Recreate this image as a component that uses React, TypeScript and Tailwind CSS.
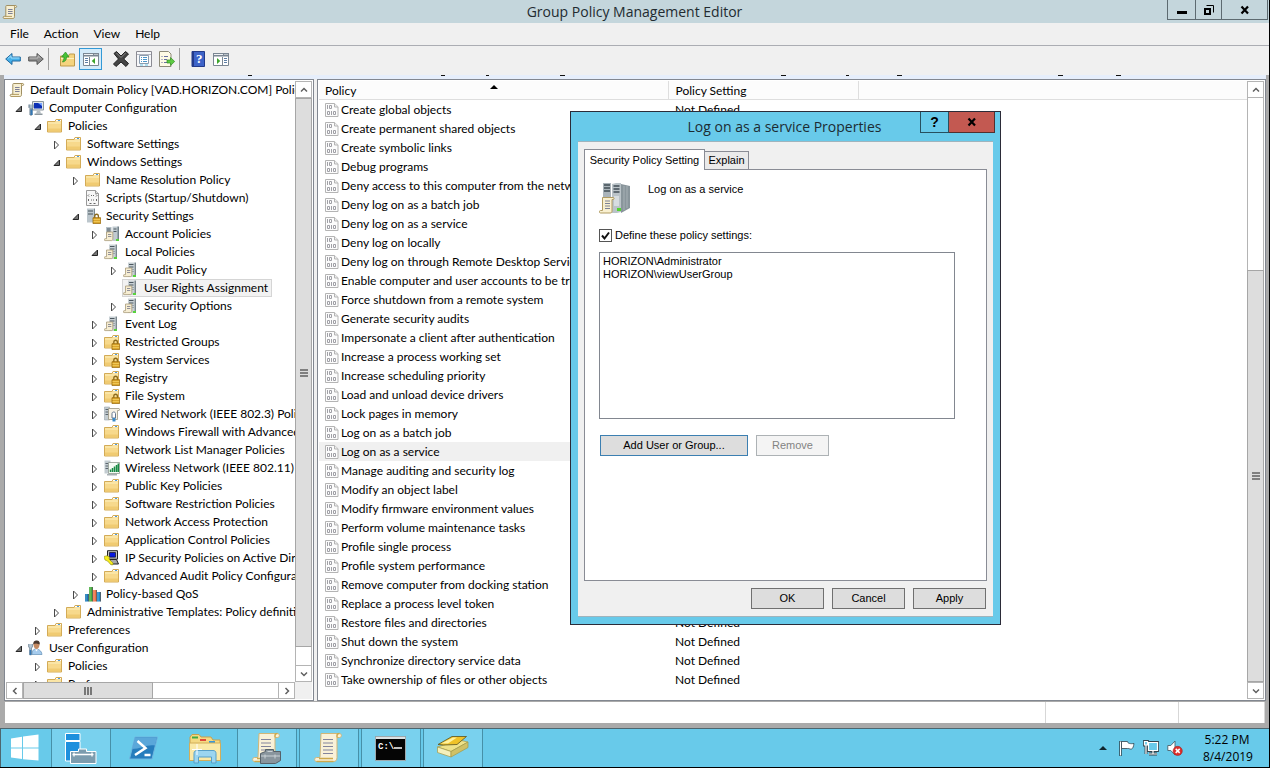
import React from "react";

type IconName =
  | "scroll" | "computer" | "folder" | "script" | "serverLock" | "servers" | "server"
  | "folderLock" | "wired" | "wireless" | "ipsec" | "qos" | "user";

const Paper = () => (
  <>
    <path d="M4.500 1.500h9.200c1.200 0 1.300 2 0 2h-1.200v9.200c0 1.200-.6 1.800-1.700 1.800H2.200c-1.400 0-1.400-2.200 0-2.200h1.600V2.600c0-.7.2-1.100.7-1.100z" fill="#f7efd2" stroke="#a08f62" />
    <path d="M12.500 3.500V2.200c0-.5.4-.7.9-.7M2.200 14.500h8M10 12.400H3" stroke="#b39c62" fill="none" />
    <path d="M6 5.500h4.600M6 7.500h4.600M6 9.500h4.600" stroke="#7d7f96" />
  </>
);

const FolderShape = () => (
  <>
    <path d="M.5 3.500h7.500l1-2h5.500v12.500H.5z" fill="#f7d98c" stroke="#d3ab57" />
    <path d="M1 4.500h13v1H1z" fill="#fdf0c0" />
    <path d="M9 2h5v1.200H9z" fill="#fff" />
    <path d="M11 2h2v1h-2z" fill="#4b9be0" />
    <path d="M1 10.500h13v3H1z" fill="#f0cb72" />
  </>
);

const Lock = () => (
  <>
    <path d="M9.800 10V8.200c0-2.600 3.600-2.600 3.600 0V10" fill="none" stroke="#8b6a1d" strokeWidth="1.300" />
    <path d="M8 9.700h7.600v5.900H8z" fill="#dba52b" stroke="#9a6c10" strokeWidth=".8" />
    <path d="M8.500 11.500h6.600M8.500 13.600h6.600" stroke="#f4cf63" strokeWidth=".8" />
  </>
);

const MiniPaper = () => (
  <>
    <path d="M2.500 6h6.300v7c0 1-.5 1.600-1.300 1.600H1c-1 0-1-1.900 0-1.900h1.500z" fill="#f6edd2" stroke="#a89b78" strokeWidth=".8" />
    <path d="M4 8.500h3.300M4 10.500h3.300" stroke="#77778a" strokeWidth=".8" />
  </>
);

const Tower = () => (
  <>
    <path d="M5 .500h6.500v14.500H5z" fill="#c9d1d5" />
    <path d="M11.500.500H13V13.500l-1.500 1.500z" fill="#7b878e" />
    <path d="M6 2.500h4.500M6 5h4.500" stroke="#4d5860" />
    <path d="M6 7.500h5M6 9.500h5" stroke="#9aa5ab" />
    <path d="M10 13h3v2h-3z" fill="#57d43a" />
  </>
);

function TreeIcon({ name }: { name: IconName }) {
  return (
    <svg viewBox="0 0 16 16" className="size-4 shrink-0" aria-hidden="true">
      {name === "scroll" && <Paper />}
      {name === "folder" && <FolderShape />}
      {name === "folderLock" && (<><FolderShape /><Lock /></>)}
      {name === "computer" && (
        <>
          <path d="M4.500 1.500h11v8.500h-11z" fill="#dfe5ea" stroke="#8c969e" />
          <path d="M6 3h8v5.500H6z" fill="#0b2fb5" />
          <path d="M10 3h4v3z" fill="#7ba5ff" />
          <path d="M9 10.500h3l1 3H8z" fill="#b5bec4" />
          <path d="M6.500 13.500h8v1.500h-8z" fill="#8d989f" />
          <path d="M1 4.500v3l1 1v6.500h2V8.500l1-1v-3" stroke="#63788a" fill="#a9bccb" />
          <path d="M2.500 9.500h2V15h-2z" fill="#3377b5" />
        </>
      )}
      {name === "script" && (
        <>
          <path d="M1.500.500h9l3 3v12h-12z" fill="#f7f7f7" stroke="#999" />
          <path d="M10.500.500v3h3" fill="#e2e2e2" stroke="#999" />
          <path d="M4 4.500l-1 1 1 1M11 4.500l1 1-1 1M6 5.500h1M8 5.500h1M4 9l-1 1 1 1M11 9l1 1-1 1M6 10h1M8 10h1M4.500 13.500h2M8.500 13.500h2" fill="none" stroke="#666" />
        </>
      )}
      {name === "serverLock" && (
        <>
          <path d="M2 .500h7v14H2z" fill="#bcc6cc" />
          <path d="M9 .500h1v13l-1 1z" fill="#7c8991" />
          <path d="M3 3h5M3 6h5" stroke="#47545d" />
          <Lock />
        </>
      )}
      {name === "server" && (<><Tower /><MiniPaper /></>)}
      {name === "servers" && (
        <>
          <path d="M2 1h5.500v12H2z" fill="#b5c0c7" />
          <path d="M3 3h3.500M3 5h3.500" stroke="#4d5860" />
          <path d="M8.500.500h5.500v14.500H8.500z" fill="#c0cad0" />
          <path d="M13.500.500H15V14l-1.500 1z" fill="#73818a" />
          <path d="M9.500 3h3M9.500 5.500h3" stroke="#4d5860" />
          <path d="M12 13h3v2h-3z" fill="#57d43a" />
          <MiniPaper />
        </>
      )}
      {name === "wired" && (
        <>
          <path d="M.5 1h5v13h-5z" fill="#c3ccd1" stroke="#9aa5ac" strokeWidth=".6" />
          <path d="M1.500 3.500h3M1.500 6h3M1.500 8.500h3" stroke="#5a656d" />
          <path d="M4.500 2.500H15c.8 0 .8 2 0 2h-1.500v9h-9z" fill="#f6f1e4" stroke="#9b9481" strokeWidth=".8" />
          <path d="M8 12V7.500c0-2 3.500-2 3.500 0V12z" fill="#fff" stroke="#64768e" />
          <path d="M8.500 12h3v3.500h-3z" fill="#3a8ac9" />
        </>
      )}
      {name === "wireless" && (
        <>
          <path d="M.5.500h6v13h-6z" fill="#c3ccd1" />
          <path d="M1.500 3.500h3M1.500 6h3M1.500 8.500h3" stroke="#5a656d" />
          <path d="M4.500 2.500h11v11h-11z" fill="#f7fbf6" stroke="#919b90" strokeWidth=".8" />
          <path d="M6.500 12V9.500M8.500 12V8M10.500 12V6.500M12.500 12V5M14.300 12V3.500" stroke="#188a44" strokeWidth="1.500" />
          <path d="M3 14h10v1.500H3z" fill="#a8b0b4" />
        </>
      )}
      {name === "ipsec" && (
        <>
          <path d="M3.500.700h10v8.500h-10z" fill="#c4c4c4" stroke="#222" />
          <path d="M5.500 2.500h6v4.700h-6z" fill="#0718e0" stroke="#000" strokeWidth=".6" />
          <path d="M6 9.500h6.500l2 4.500H6.500z" fill="#a8a8a8" stroke="#222" />
          <path d="M0 6.500l3-.800 2.500 1.300-.5 2 4 4v1.800H7L3.500 11 1 10z" fill="#f7ee1b" stroke="#90891a" strokeWidth=".6" />
        </>
      )}
      {name === "qos" && (
        <>
          <path d="M0 8h3.500v7.500H0z" fill="#1878b8" />
          <path d="M4 1h3.500v14.500H4z" fill="#46ad3d" />
          <path d="M8 4h3.500v11.500H8z" fill="#ee7146" />
          <path d="M12 6h3.500v9.500H12z" fill="#1d88c9" />
          <path d="M1 8v7M5 1v14M9 4v11M13 6v9" stroke="#fff" opacity=".3" />
          <path d="M3.500 8v7.500M7.500 1v14.500M11.500 4v11.500M15.500 6v9.500" stroke="#222" strokeWidth=".6" />
        </>
      )}
      {name === "user" && (
        <>
          <path d="M4 14.500c0-4 1.500-5.500 4-5.500s5.500 1.500 6 5.500z" fill="#a5cbed" stroke="#6390b7" strokeWidth=".7" />
          <path d="M5.500 4.500C5.500 0 11.500 0 11.500 4.500c0 2.500-1.300 4.500-3 4.500s-3-2-3-4.500z" fill="#c58a62" />
          <path d="M5.300 4.500C5 .5 8 .2 9 .5c3 .3 3 3 2.500 4C10 3.500 8 4 7 3.500z" fill="#49372e" />
          <path d="M7 9.500l1.500 2L10 9.300z" fill="#fff" />
          <path d="M.700 4v3l1 1v6.800h1.700V8l1-1V4" stroke="#63788a" fill="#b7c8d6" strokeWidth=".8" />
          <path d="M1.700 10h1.600v5H1.700z" fill="#3377b5" />
        </>
      )}
    </svg>
  );
}

const ListIcon = () => (
  <svg viewBox="0 0 14 14" className="size-3.5 shrink-0" aria-hidden="true">
    <path d="M.5.500h9l3.500 3.300v9.700H.5z" fill="#fcfcfc" stroke="#b4b4b4" />
    <path d="M9.500.500v3.500h3.500" fill="#eee" stroke="#b4b4b4" />
    <path d="M2.500 2V6M4.500 2.500h2v3h-2zM2.500 8.500h2v3h-2zM6.500 8V12M8.500 8.500h2v3h-2z" fill="none" stroke="#a0a0a6" />
  </svg>
);

type Node = { label: string; level: number; icon: IconName; state?: "open" | "closed"; selected?: boolean };

const tree: Node[] = [
  { label: "Computer Configuration", level: 1, icon: "computer", state: "open" },
  { label: "Policies", level: 2, icon: "folder", state: "open" },
  { label: "Software Settings", level: 3, icon: "folder", state: "closed" },
  { label: "Windows Settings", level: 3, icon: "folder", state: "open" },
  { label: "Name Resolution Policy", level: 4, icon: "folder", state: "closed" },
  { label: "Scripts (Startup/Shutdown)", level: 4, icon: "script" },
  { label: "Security Settings", level: 4, icon: "serverLock", state: "open" },
  { label: "Account Policies", level: 5, icon: "servers", state: "closed" },
  { label: "Local Policies", level: 5, icon: "server", state: "open" },
  { label: "Audit Policy", level: 6, icon: "server", state: "closed" },
  { label: "User Rights Assignment", level: 6, icon: "server", selected: true },
  { label: "Security Options", level: 6, icon: "server", state: "closed" },
  { label: "Event Log", level: 5, icon: "server", state: "closed" },
  { label: "Restricted Groups", level: 5, icon: "folderLock", state: "closed" },
  { label: "System Services", level: 5, icon: "folderLock", state: "closed" },
  { label: "Registry", level: 5, icon: "folderLock", state: "closed" },
  { label: "File System", level: 5, icon: "folderLock", state: "closed" },
  { label: "Wired Network (IEEE 802.3) Policies", level: 5, icon: "wired", state: "closed" },
  { label: "Windows Firewall with Advanced Security", level: 5, icon: "folder", state: "closed" },
  { label: "Network List Manager Policies", level: 5, icon: "folder" },
  { label: "Wireless Network (IEEE 802.11) Policies", level: 5, icon: "wireless", state: "closed" },
  { label: "Public Key Policies", level: 5, icon: "folder", state: "closed" },
  { label: "Software Restriction Policies", level: 5, icon: "folder", state: "closed" },
  { label: "Network Access Protection", level: 5, icon: "folder", state: "closed" },
  { label: "Application Control Policies", level: 5, icon: "folder", state: "closed" },
  { label: "IP Security Policies on Active Directory", level: 5, icon: "ipsec", state: "closed" },
  { label: "Advanced Audit Policy Configuration", level: 5, icon: "folder", state: "closed" },
  { label: "Policy-based QoS", level: 4, icon: "qos", state: "closed" },
  { label: "Administrative Templates: Policy definitions", level: 3, icon: "folder", state: "closed" },
  { label: "Preferences", level: 2, icon: "folder", state: "closed" },
  { label: "User Configuration", level: 1, icon: "user", state: "open" },
  { label: "Policies", level: 2, icon: "folder", state: "closed" },
  { label: "Preferences", level: 2, icon: "folder", state: "closed" },
];

const policies = [
  "Create global objects",
  "Create permanent shared objects",
  "Create symbolic links",
  "Debug programs",
  "Deny access to this computer from the network",
  "Deny log on as a batch job",
  "Deny log on as a service",
  "Deny log on locally",
  "Deny log on through Remote Desktop Services",
  "Enable computer and user accounts to be trusted",
  "Force shutdown from a remote system",
  "Generate security audits",
  "Impersonate a client after authentication",
  "Increase a process working set",
  "Increase scheduling priority",
  "Load and unload device drivers",
  "Lock pages in memory",
  "Log on as a batch job",
  "Log on as a service",
  "Manage auditing and security log",
  "Modify an object label",
  "Modify firmware environment values",
  "Perform volume maintenance tasks",
  "Profile single process",
  "Profile system performance",
  "Remove computer from docking station",
  "Replace a process level token",
  "Restore files and directories",
  "Shut down the system",
  "Synchronize directory service data",
  "Take ownership of files or other objects",
];

const indent: Record<number, string> = {
  1: "pl-[9px]",
  2: "pl-[28px]",
  3: "pl-[47px]",
  4: "pl-[66px]",
  5: "pl-[85px]",
  6: "pl-[104px]",
};

const Arrow = ({ state }: { state?: "open" | "closed" }) => (
  <svg viewBox="0 0 8 16" className="h-4 w-2 shrink-0" aria-hidden="true">
    {state === "open" && <path d="M6.500 6v5.500H1z" fill="#777" stroke="#262626" />}
    {state === "closed" && <path d="M1.500 5v8l4-4z" fill="#fff" stroke="#4a4a4a" />}
  </svg>
);

function TreeItem({ node }: { node: Node }) {
  return (
    <li className={`flex h-[18px] items-center gap-[5px] whitespace-nowrap ${indent[node.level]}`} role="treeitem" aria-selected={!!node.selected}>
      <Arrow state={node.state} />
      <span className={node.selected ? "-m-px flex h-[18px] items-center gap-[5px] border border-[#d5d5d5] bg-[#f2f2f2] pr-[3px]" : "flex items-center gap-[5px]"}>
        <TreeIcon name={node.icon} />
        <span className="leading-4">{node.label}</span>
      </span>
    </li>
  );
}

const chevrons = {
  up: "M5 9.500l3-3 3 3",
  down: "M5 6.500l3 3 3-3",
  left: "M9.500 5l-3 3 3 3",
  right: "M6.500 5l3 3-3 3",
};

const ScrollButton = ({ dir }: { dir: keyof typeof chevrons }) => (
  <button type="button" aria-label={`Scroll ${dir}`} className="flex size-[17px] shrink-0 items-center justify-center border border-[#b4b4b4] bg-white">
    <svg viewBox="0 0 16 16" className="size-4 shrink-0" aria-hidden="true">
      <path d={chevrons[dir]} fill="none" stroke="#606060" strokeWidth="1.500" />
    </svg>
  </button>
);

const Grip = ({ vertical }: { vertical?: boolean }) => (
  <svg viewBox="0 0 8 8" className={`size-2 ${vertical ? "rotate-90" : ""}`} aria-hidden="true">
    <path d="M0 1h8M0 4h8M0 7h8" stroke="#606060" strokeWidth="1.600" />
  </svg>
);

const TBtn = ({ label, active, children }: { label: string; active?: boolean; children: React.ReactNode }) => (
  <button type="button" aria-label={label} className={`flex h-[22px] w-[23px] items-center justify-center ${active ? "border border-[#3399d6] bg-[#d5ebf9]" : ""}`}>
    <svg viewBox="0 0 16 16" className="size-4 shrink-0" aria-hidden="true">{children}</svg>
  </button>
);

const WindowPanes = ({ left }: { left?: boolean }) => (
  <>
    <path d="M.5 2.500h15v12H.5z" fill="#fff" stroke="#7b8793" />
    <path d="M0 2h16v3.500H0z" fill="#7b8793" />
    <path d="M1 3h9v1H1z" fill="#f1f3f5" />
    <path d="M11.500 3.500h1M13.500 3.500h1" stroke="#fff" />
    {left ? (
      <>
        <path d="M6.500 6v8" stroke="#7b8793" />
        <path d="M2 7.500h3M2 9.500h3M2 11.500h3" stroke="#5f7fa5" />
        <path d="M12 7v6L8.700 10z" fill="#3da52c" />
      </>
    ) : (
      <>
        <path d="M9.500 6v8" stroke="#7b8793" />
        <path d="M11 7.500h3M11 9.500h3M11 11.500h3" stroke="#5f7fa5" />
        <path d="M4 7v6l3.300-3z" fill="#3da52c" />
      </>
    )}
  </>
);

function Toolbar() {
  return (
    <div className="flex h-[29px] items-center bg-[#f0f0f0] pb-1 pl-px pr-2">
      <TBtn label="Back">
        <path d="M.7 8L7 2.500V6h8.300v4H7v3.500z" fill="#45b0ea" stroke="#20699f" />
        <path d="M2.800 7.500L6 4.700V7h8.500" fill="none" stroke="#a4defa" />
      </TBtn>
      <TBtn label="Forward">
        <path d="M15.300 8L9 2.500V6H.7v4H9v3.500z" fill="#8c8c8c" stroke="#555" />
        <path d="M1.500 7H10V4.700L12.500 7" fill="none" stroke="#bdbdbd" />
      </TBtn>
      <span className="ml-px mr-1.5 h-[22px] w-px bg-[#a0a0a0]" />
      <TBtn label="Up one level">
        <path d="M1.500 5h8l1-2h5v12h-14z" fill="#f5d47f" stroke="#c09a4a" />
        <path d="M2 7h13v1H2z" fill="#fff0bd" />
        <path d="M3.500 11C7 10.500 7.500 8 7.500 6H10L6.500 1 2.500 6H5c0 2-.5 3-1.500 5z" fill="#46c236" stroke="#2a8c22" strokeWidth=".7" />
      </TBtn>
      <span className="w-px" />
      <TBtn label="Show console tree" active><WindowPanes left /></TBtn>
      <span className="w-[7px]" />
      <TBtn label="Delete">
        <path d="M1 2.500L3.500.5 8 5l4.500-4.500L15.500 3 10.700 8l4.800 4.500L13 15.500 8 11l-5 4.500L.5 13l5-5z" fill="#454545" stroke="#222" />
        <path d="M3.500 2L8 6.500 12.500 2" fill="none" stroke="#888" />
      </TBtn>
      <TBtn label="Properties">
        <path d="M.5.500h15v15H.5z" fill="#f7f8fa" stroke="#8b8b93" />
        <path d="M1 3.500h14" stroke="#b2b5bf" />
        <path d="M3.500 4.500h9v8h-9z" fill="#fff" stroke="#8b9cae" />
        <path d="M5 6.500h1M7 6.500h4M5 8.500h1M7 8.500h4M5 10.500h1M7 10.500h4" stroke="#4a95c9" />
        <path d="M4 14h3M9 14h3" stroke="#67c6e8" />
      </TBtn>
      <TBtn label="Export list">
        <path d="M.5.500h9l2.500 2.500v12.500H.5z" fill="#fffbe5" stroke="#8e8b78" />
        <path d="M2.500 5.500h1M5 5.500h4M2.500 8.500h1M5 8.500h3M2.500 11.500h1M5 11.500h3" stroke="#696fa0" />
        <path d="M8 9h3.500V6.500L15.700 10.500l-4.200 4V12H8z" fill="#5ecb43" stroke="#338c24" strokeWidth=".7" />
      </TBtn>
      <span className="ml-px mr-1.5 h-[22px] w-px bg-[#a0a0a0]" />
      <TBtn label="Help">
        <path d="M2 .500h12.500v15H2z" fill="#3d63c8" stroke="#223a8a" />
        <path d="M2 .500h2v15H2z" fill="#223a8a" />
        <text x="9.300" y="12.300" textAnchor="middle" fontSize="13" fontWeight="700" fill="#fff" fontFamily="Liberation Serif, serif">?</text>
      </TBtn>
      <TBtn label="Show action pane"><WindowPanes /></TBtn>
    </div>
  );
}

const dlgButton = "h-[21px] w-[73px] border border-[#707070] bg-[#dddddd] text-center leading-none";

function Dialog() {
  return (
    <section role="dialog" aria-label="Log on as a service Properties" className="absolute left-[570px] top-[111px] flex h-[514px] w-[431px] flex-col border border-[#2b2b38] bg-[#68caea] px-[7px] pb-[7px] font-['Liberation_Sans',Arial,sans-serif] text-[11px]">
      <header className="-mr-[2px] flex h-[29px] shrink-0 items-start">
        <h2 className="flex-1 pl-[71px] pt-1 text-center font-['Open_Sans','Noto_Sans',sans-serif] text-[14px] leading-[22px] text-[#1c2c33]">Log on as a service Properties</h2>
        <button type="button" aria-label="Help" className="h-[21px] w-[29px] border border-t-0 border-[#27505f] text-[14px] font-bold leading-none">?</button>
        <button type="button" aria-label="Close" className="flex h-[21px] w-[46px] items-center justify-center border border-l-0 border-t-0 border-[#51302f] bg-[#c35951]">
          <svg viewBox="0 0 10 10" className="size-2.5" aria-hidden="true"><path d="M1.500 1.500l6.500 7M8 1.500l-6.500 7" stroke="#000" strokeWidth="2.200" /></svg>
        </button>
      </header>
      <div className="flex flex-1 flex-col border-t border-b border-[#9fb4bd] bg-[#f0f0f0] px-1.5 pb-[7px] pt-[7px]">
        <div role="tablist" className="flex items-end">
          <button type="button" role="tab" aria-selected="true" className="relative -mb-px h-[21px] w-[121px] whitespace-nowrap border border-b-0 border-[#898c95] bg-white text-center leading-none">Security Policy Setting</button>
          <button type="button" role="tab" aria-selected="false" className="h-[18px] w-[44px] border border-b-0 border-l-0 border-[#898c95] bg-[#eaeaea] text-center leading-none">Explain</button>
        </div>
        <div role="tabpanel" className="flex-1 border border-[#898c95] bg-white px-[14px] pt-3">
          <div className="flex gap-[17px]">
            <svg viewBox="0 0 32 32" className="size-8 shrink-0" aria-hidden="true">
              <path d="M4 1h8v28H4z" fill="#aab4ba" />
              <path d="M13 2l4-1h5v29l-4 1h-5z" fill="#bac3c8" />
              <path d="M22 2l9 2v22l-9 5z" fill="#89959b" />
              <path d="M25 4v24M28 4v22" stroke="#a6b0b5" />
              <path d="M5 3h6M5 6h6M5 9h6M14.500 4h6M14.500 7h6M14.500 10h6" stroke="#414e55" strokeWidth="1.500" />
              <path d="M15 14h5v10h-5z" fill="#d7dde0" />
              <path d="M18 26h4v3h-4z" fill="#52d331" />
              <path d="M3.500 15.500h10.500c1.500 0 1.500 2 0 2h-1v11.500c0 1.500-.5 2-2 2H1.500c-1.500 0-1.500-2.500 0-2.500h2z" fill="#f9f0d0" stroke="#b19c63" />
              <path d="M6 19h5M6 21.500h5M6 24h5M6 26.500h5" stroke="#7c8296" />
            </svg>
            <p className="pt-px leading-3">Log on as a service</p>
          </div>
          <label className="mt-[14px] flex h-[15px] items-center gap-[3px]">
            <span className="relative flex size-[13px]">
              <input type="checkbox" defaultChecked className="peer size-[13px] appearance-none border border-[#555] bg-white" />
              <svg viewBox="0 0 13 13" className="pointer-events-none absolute inset-0 hidden size-[13px] peer-checked:block" aria-hidden="true"><path d="M3 6.500l2.500 3 4.500-6" fill="none" stroke="#111" strokeWidth="2" /></svg>
            </span>
            Define these policy settings:
          </label>
          <ul className="mr-[17px] mt-[9px] h-[167px] border border-[#828790] px-[3px] pt-[2px] leading-[13px]">
            <li>HORIZON\Administrator</li>
            <li>HORIZON\viewUserGroup</li>
          </ul>
          <div className="mt-4 flex gap-2 pl-px">
            <button type="button" className="h-[21px] w-[148px] border border-[#3c7fb1] bg-[#dddddd] text-center leading-none">Add User or Group...</button>
            <button type="button" disabled className="h-[21px] w-[73px] border border-[#adb2b5] bg-[#f4f4f4] text-center leading-none text-[#838383]">Remove</button>
          </div>
        </div>
        <footer className="mt-[7px] flex justify-end gap-2 pr-px">
          <button type="button" className={dlgButton}>OK</button>
          <button type="button" className={dlgButton}>Cancel</button>
          <button type="button" className={dlgButton}>Apply</button>
        </footer>
      </div>
    </section>
  );
}

const Scroll32 = () => (
  <>
    <path d="M8 1.500h18.500c2.500 0 2.500 4 0 4H24v20c0 2.500-1 4-3.500 4H3.500c-2.500 0-2.500-4 0-4H7z" fill="#f9f1d8" stroke="#d0b678" />
    <path d="M24 5.500V3.500c0-1.500 1-2 2.500-2M3.500 29.500h17M6 26.500h14" stroke="#cda94b" fill="none" strokeWidth="1.500" />
    <path d="M10 7.500h10M10 11h10M10 14.500h10M10 18h10M10 21.500h10" stroke="#83849c" />
  </>
);

const TaskButton = ({ label, running, children }: { label: string; running?: boolean; children: React.ReactNode }) => (
  <button type="button" aria-label={label} className={`flex h-full w-[60px] items-center justify-center border-x ${running ? "border-[#4690a8] bg-[#79d1ee]" : "border-transparent"}`}>
    <svg viewBox="0 0 32 32" className="size-8" aria-hidden="true">{children}</svg>
  </button>
);

function Taskbar() {
  return (
    <footer className="flex h-10 shrink-0 items-stretch border-b border-t border-b-black border-t-[#4d666f] bg-[#68caea]">
      <button type="button" aria-label="Start" className="flex w-[51px] items-center border-l border-[#4d666f] pl-2.5">
        <svg viewBox="0 0 28 28" className="size-7" aria-hidden="true">
          <path d="M0 4.500l11-1.700v10.700H0zM12 2.600L27.500.500v13H12zM0 14.500h11v10.500L0 23.500zM12 14.500h15.500v12L12 25.300z" fill="#fff" />
        </svg>
      </button>
      <TaskButton label="Server Manager" running>
        <path d="M.5 1.500h14.500v7H.5zM.5 9.500h14.500v19.500H.5z" fill="#1e90dd" stroke="#fff" />
        <path d="M5.500 19.500h8v-2.500h8v2.500h9.500v12h-25.500z" fill="#7c9cae" stroke="#fff" />
        <path d="M7.500 22.500h21M9 20.500v4M27 20.500v4" stroke="#fff" strokeWidth="1.300" />
      </TaskButton>
      <span className="w-[2px]" />
      <TaskButton label="Windows PowerShell">
        <path d="M8 5h22.500L25 27H2.500z" fill="#267dbd" stroke="#6fb6e0" strokeLinejoin="round" />
        <path d="M8 5.500h22l-2 8C20 12 14 17 5 17z" fill="#5aa7da" />
        <path d="M10.500 9l8 7-10.500 7M17.500 23h6" fill="none" stroke="#fff" strokeWidth="2.500" />
      </TaskButton>
      <span className="w-[2px]" />
      <TaskButton label="File Explorer">
        <path d="M1 5l2-2.500h7l2 2.500h10l2 3h7v19H1z" fill="#f4d982" stroke="#c8a04d" />
        <path d="M3 4.500h6v2H3z" fill="#40aa46" /><path d="M11 7h6v2h-6z" fill="#df493b" /><path d="M20 9h6v2h-6z" fill="#3a97d8" />
        <path d="M.500 11h31v17.500H.500z" fill="#fae9a7" stroke="#d2ae5a" />
        <path d="M5 31V21.500c0-2 1-3 3-3h16c2 0 3 1 3 3V31h-4.500v-6h-13v6z" fill="#9bd5f0" stroke="#579fc7" />
        <path d="M8 12v11M3 17.500h10" stroke="#fff" />
      </TaskButton>
      <span className="w-[2px]" />
      <div className="flex gap-[2px]">
        <TaskButton label="Group Policy Management" running>
          <Scroll32 />
          <path d="M9.500 21.500l5-2v-2h8v2h7v9l-5 3h-15z" fill="#89959d" stroke="#566169" />
          <path d="M10 24h19M16.500 19.500h5M14 22.500v4M24 22.500v4" stroke="#cbd3d7" />
        </TaskButton>
        <TaskButton label="Group Policy Management Editor" running><Scroll32 /></TaskButton>
        <TaskButton label="Command Prompt" running>
          <path d="M.500 4.500h30v24H.500z" fill="#050505" stroke="#9ea9ad" />
          <path d="M1 5h29v2H1z" fill="#dbe2e4" />
          <text x="3" y="17" fontSize="9" fontWeight="700" fill="#fff" fontFamily="Liberation Mono, monospace">C:\</text>
          <path d="M19 16h8" stroke="#fff" strokeWidth="1.500" />
        </TaskButton>
        <TaskButton label="Network tool" running>
          <path d="M.500 15L14 19.500 31 10l-9-2z" fill="#eee28a" stroke="#a59a45" strokeWidth=".7" />
          <path d="M.500 15l13.500 4.500V25L.500 20.500z" fill="#f5f0bb" stroke="#a59a45" strokeWidth=".7" />
          <path d="M14 19.500L31 10v5.500L14 25z" fill="#cfc165" stroke="#a59a45" strokeWidth=".7" />
          <path d="M1 12.500L15 4.500h14.500L20 12.500 6.500 13z" fill="#efc228" stroke="#59521f" strokeWidth=".8" />
          <path d="M4 11.500L16 5.500h4l-9 6z" fill="#fff2a0" />
        </TaskButton>
      </div>
      <div className="ml-auto flex items-center pr-[18px]">
        <svg viewBox="0 0 8 4" className="mr-3 h-1 w-2" aria-hidden="true"><path d="M0 4l4-4 4 4z" fill="#10252e" /></svg>
        <svg viewBox="0 0 16 16" className="mr-2 size-4" aria-hidden="true">
          <path d="M1.500 1v15" stroke="#31434c" strokeWidth="2.500" /><path d="M1.500 1.500v14" stroke="#fff" />
          <path d="M2.500 1.500h6c0 2 3 2.500 6.500 2-.5 3-1 5-2.500 5.500s-3-1-4-.5h-6z" fill="#fff" stroke="#31434c" strokeWidth=".8" />
        </svg>
        <svg viewBox="0 0 16 16" className="mr-2 size-4" aria-hidden="true">
          <path d="M5.500 2.500h9v8h-9zM10 10.500v3.500M6 14h8M1.500 1.500h3v3.500h-3zM3 5v9" fill="none" stroke="#31434c" strokeWidth="2.800" />
          <path d="M5.500 2.500h9v8h-9z" fill="#68caea" stroke="#fff" strokeWidth="1.200" />
          <path d="M10 10.500v3.500M6 14h8M3 5v9" stroke="#fff" strokeWidth="1.200" />
          <path d="M1.500 1.500h3v3.500h-3z" fill="#68caea" stroke="#fff" strokeWidth="1.200" />
        </svg>
        <svg viewBox="0 0 16 16" className="mr-5 size-4" aria-hidden="true">
          <path d="M.8 5.500h3L8 1v14L3.800 10.500h-3z" fill="#fff" stroke="#4b626c" strokeWidth=".9" />
          <circle cx="10.700" cy="10.900" r="4.600" fill="#dd2f2b" stroke="#9e1916" strokeWidth=".5" />
          <path d="M8.700 8.900l4 4M12.700 8.900l-4 4" stroke="#fff" strokeWidth="1.500" />
        </svg>
        <div className="w-12 whitespace-nowrap text-center font-['Open_Sans','Noto_Sans',sans-serif] leading-[17px]"><div>5:22 PM</div><div>8/4/2019</div></div>
      </div>
    </footer>
  );
}

export default function App() {
  return (
    <div className="relative flex h-screen flex-col overflow-hidden border-r border-black bg-[#aaaaaa] font-['Lato','Open_Sans',sans-serif] text-[12px] text-black">
      <header className="flex h-[23px] shrink-0 items-start bg-[#c4d6dc]">
        <span className="flex w-[102px] pl-0.5 pt-1"><TreeIcon name="scroll" /></span>
        <h1 className="flex-1 text-center font-['Open_Sans','Noto_Sans',sans-serif] text-[14px] leading-[23px] text-[#222b30]">Group Policy Management Editor</h1>
        <div className="mr-px flex h-5 border border-t-0 border-[#5d6a70]">
          <button type="button" aria-label="Minimize" className="flex w-[27px] items-center justify-center">
            <svg viewBox="0 0 10 10" className="size-2.5" aria-hidden="true"><path d="M0 6h10v3H0z" /></svg>
          </button>
          <button type="button" aria-label="Restore" className="flex w-[27px] items-center justify-center border-x border-[#5d6a70]">
            <svg viewBox="0 0 10 10" className="size-2.5" aria-hidden="true"><path d="M1 4h5v5H1z" fill="none" stroke="#000" strokeWidth="2" /><path d="M2.500.500h7v7" fill="none" stroke="#000" /></svg>
          </button>
          <button type="button" aria-label="Close" className="flex w-[45px] items-center justify-center">
            <svg viewBox="0 0 10 10" className="size-2.5" aria-hidden="true"><path d="M1.500 1.500l6.500 7M8 1.500l-6.500 7" stroke="#000" strokeWidth="2.200" /></svg>
          </button>
        </div>
      </header>
      <nav className="flex h-[23px] shrink-0 items-center gap-[15px] border-b border-[#abadb3] bg-[#f0f0f0] pl-[10px]">
        <button type="button">File</button>
        <button type="button">Action</button>
        <button type="button">View</button>
        <button type="button">Help</button>
      </nav>
      <Toolbar />
      <div className="ml-1 mr-[3px] h-1 shrink-0 bg-[#e6eefb]">
        <svg className="block h-px w-full" aria-hidden="true">
          <path d="M244 .5h4M437 .5h4M482 .5h3M556 .5h5M777 .5h5M842 .5h3M893 .5h5M1054 .5h5M1112 .5h5" stroke="#111" />
        </svg>
      </div>
      <main className="ml-1 mr-[3px] flex min-h-0 flex-1 gap-[3px] bg-[#f0f0f0]">
        <section aria-label="Console tree" className="flex w-[310px] shrink-0 flex-col border border-[#828790] bg-white p-px">
          <div className="flex min-h-0 flex-1">
            <ul role="tree" className="min-w-0 flex-1 overflow-hidden">
              <li className="flex h-[18px] items-center gap-[5px] whitespace-nowrap pl-[3px]"><TreeIcon name="scroll" /><span className="leading-4">Default Domain Policy [VAD.HORIZON.COM] Policy</span></li>
              {tree.map((n, i) => <TreeItem key={i} node={n} />)}
            </ul>
            <div className="flex w-[17px] flex-col bg-white">
              <ScrollButton dir="up" />
              <div className="flex flex-1 items-center justify-center border border-[#a6a6a6] bg-[#dddddd]"><Grip /></div>
              <div className="h-[18px] border-x border-[#b4b4b4]" />
              <ScrollButton dir="down" />
            </div>
          </div>
          <div className="flex h-[17px] shrink-0 bg-white">
            <ScrollButton dir="left" />
            <div className="flex w-[130px] items-center justify-center border border-[#a6a6a6] bg-[#dddddd]"><Grip vertical /></div>
            <div className="flex-1 border-y border-[#b4b4b4]" />
            <ScrollButton dir="right" />
            <div className="w-[17px] bg-[#f0f0f0]" />
          </div>
        </section>
        <section aria-label="Policies" className="flex min-w-0 flex-1 border border-[#828790] bg-white p-px">
          <div className="min-w-0 flex-1 overflow-hidden">
            <div className="bg-[linear-gradient(#fcfcfc_18px,#dedede_18px,#dedede_19px,transparent_19px)]">
              <table className="w-[539px] table-fixed border-collapse text-left">
                <colgroup><col className="w-[349px]" /><col className="w-[190px]" /></colgroup>
                <thead>
                  <tr className="h-[19px]">
                    <th scope="col" className="border-r border-[#dedede] p-0 pl-1.5 font-normal leading-[18px]">
                      <span className="relative block">Policy
                        <svg viewBox="0 0 8 4" className="absolute left-[165px] top-[3px] h-1 w-2" aria-hidden="true"><path d="M0 4l4-4 4 4z" /></svg>
                      </span>
                    </th>
                    <th scope="col" className="border-r border-[#dedede] p-0 pl-[7px] font-normal leading-[18px]">Policy Setting</th>
                  </tr>
                </thead>
                <tbody>
                  {policies.map((p) => (
                    <tr key={p} className={p === "Log on as a service" ? "h-[19px] bg-[#f0f0f0]" : "h-[19px]"}>
                      <td className="p-0 pl-1.5">
                        <span className="flex h-[19px] items-center gap-[2px] overflow-hidden whitespace-nowrap"><ListIcon /><span>{p}</span></span>
                      </td>
                      <td className="p-0 pl-[7px]">Not Defined</td>
                    </tr>
                  ))}
                </tbody>
              </table>
            </div>
          </div>
          <div className="flex w-[17px] flex-col bg-white">
            <ScrollButton dir="up" />
            <div className="flex-[173] border-x border-[#b4b4b4]" />
            <div className="flex flex-[411] items-center justify-center border border-[#a6a6a6] bg-[#dddddd]"><Grip /></div>
            <ScrollButton dir="down" />
          </div>
        </section>
      </main>
      <div role="status" className="mb-[5px] ml-[5px] mr-1 mt-px flex h-[21px] shrink-0 bg-white">
        <div className="flex-1" />
        <div className="w-[133px] border-l border-[#d7d7d7]" />
        <div className="w-[87px] border-x border-[#d7d7d7]" />
      </div>
      <Taskbar />
      <Dialog />
    </div>
  );
}
